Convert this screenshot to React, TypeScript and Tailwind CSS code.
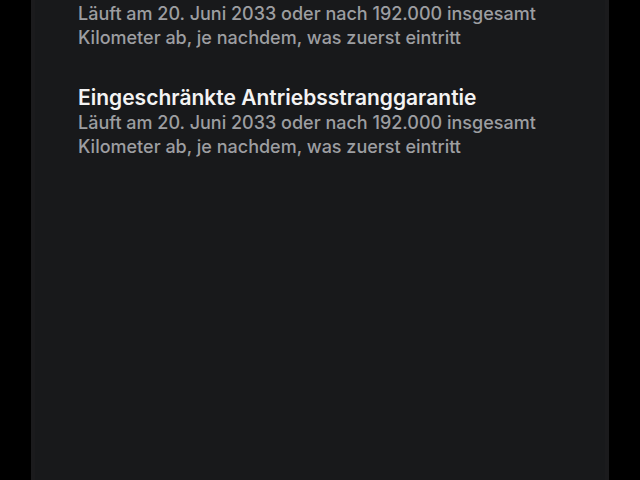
import React from 'react';

const items = [
  { title: '', body: ['Läuft am 20. Juni 2033 oder nach 192.000 insgesamt', 'Kilometer ab, je nachdem, was zuerst eintritt'] },
  { title: 'Eingeschränkte Antriebsstranggarantie', body: ['Läuft am 20. Juni 2033 oder nach 192.000 insgesamt', 'Kilometer ab, je nachdem, was zuerst eintritt'] },
];

export default function App() {
  return (
    <div className="w-[640px] h-[480px] bg-black flex justify-center overflow-hidden" style={{ fontFamily: 'Inter, "Noto Sans", sans-serif' }}>
      <div className="w-[578px] h-full bg-[#18191b] border-x-4 border-[#1b1b1d] pl-[43px] pt-[2px] flex flex-col gap-[35px]">
        {items.map((it, i) => (
          <div key={i} className="flex flex-col">
            {it.title && (
              <h3 className="text-[21px] leading-[26px] font-semibold text-[#f3f3f3]">{it.title}</h3>
            )}
            {it.body.map((l, j) => (
              <p key={j} className="text-[18px] leading-[24px] font-medium text-[#9d9ea1]">{l}</p>
            ))}
          </div>
        ))}
      </div>
    </div>
  );
}
